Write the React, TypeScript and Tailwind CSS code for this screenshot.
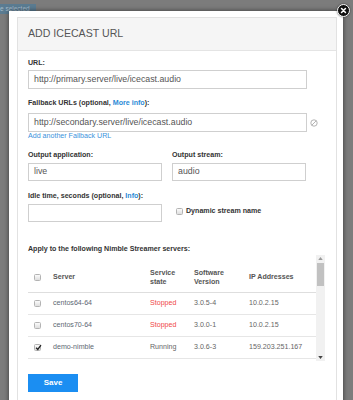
import React from "react";

const font = { fontFamily: '"Liberation Sans", Arial, sans-serif' };

function Cb({ checked }: { checked?: boolean }) {
  return (
    <span className="relative inline-flex h-[7px] w-[7px] items-center justify-center rounded-[1.5px] border border-[#b3b3b3] bg-gradient-to-b from-[#fbfbfb] to-[#dedede]">
      {checked && (
        <svg viewBox="0 0 8 8" className="absolute left-[0px] top-[-1px] h-[7px] w-[7px]">
          <path d="M1.3 4.2 L3.2 6.2 L6.8 1.2" fill="none" stroke="#222" strokeWidth="1.5" />
        </svg>
      )}
    </span>
  );
}

function Input({ value, className }: { value?: string; className: string }) {
  return (
    <div
      className={`flex items-center border border-[#cfcfcf] bg-white pl-[5px] text-[8.8px] text-[#555] ${className}`}
    >
      {value}
    </div>
  );
}

function Label({ children, className = "" }: { children: React.ReactNode; className?: string }) {
  return <div className={`h-[9px] text-[7.1px] font-bold leading-[9px] text-[#333] ${className}`}>{children}</div>;
}

const rows = [
  { name: "centos64-64", state: "Stopped", ver: "3.0.5-4", ip: "10.0.2.15", checked: false },
  { name: "centos70-64", state: "Stopped", ver: "3.0.0-1", ip: "10.0.2.15", checked: false },
  { name: "demo-nimble", state: "Running", ver: "3.0.6-3", ip: "159.203.251.167", checked: true },
];

export default function App() {
  return (
    <div className="relative h-[400px] w-[353px] overflow-hidden bg-[#7c7c7c]" style={font}>
      {/* background button behind overlay */}
      <div className="absolute left-[-8px] top-[4px] flex h-[10px] w-[44px] items-center bg-[#5b7c92] pl-[8px] text-[6.5px] leading-none text-[#a7bccb]">
        e selected
      </div>

      <div className="pl-[9px] pt-[11px]">
        <div className="relative w-[334px] bg-white pb-[20px] pl-[8px] pr-[6px] pt-[6px] shadow-[0_0_5px_rgba(0,0,0,0.55)]">
          {/* close */}
          <div className="absolute right-[-6.5px] top-[-7px] z-10 flex h-[13px] w-[13px] items-center justify-center rounded-full border-[1.5px] border-white bg-[#111] shadow-[0_0_2px_rgba(0,0,0,0.6)]">
            <svg viewBox="0 0 10 10" className="h-[7px] w-[7px]">
              <path d="M2.2 2.2 L7.8 7.8 M7.8 2.2 L2.2 7.8" stroke="#fff" strokeWidth="2.2" strokeLinecap="round" />
            </svg>
          </div>

          <div className="h-[400px] border border-[#e2e2e2]">
            <div className="flex h-[33px] items-center border-b border-[#e4e4e4] bg-[#f5f5f5] pl-[10px] text-[10.6px] text-[#555]">
              ADD ICECAST URL
            </div>

            <div className="pl-[10px] pt-[8px]">
              <Label>URL:</Label>
              <Input className="mt-[2px] h-[19px] w-[279px]" value="http://primary.server/live/icecast.audio" />

              <Label className="mt-[10px]">
                Fallback URLs (optional, <span className="text-[#2b8ad6]">More info</span>):
              </Label>
              <div className="mt-[5px] flex items-center">
                <Input className="h-[19px] w-[279px]" value="http://secondary.server/live/icecast.audio" />
                <svg viewBox="0 0 10 10" className="ml-[3px] h-[8px] w-[8px]">
                  <circle cx="5" cy="5" r="4" fill="none" stroke="#aaa" strokeWidth="1.1" />
                  <path d="M2.3 7.7 L7.7 2.3" stroke="#aaa" strokeWidth="1.1" />
                </svg>
              </div>
              <div className="h-[9px] text-[7.1px] leading-[9px] text-[#3a92dc]">Add another Fallback URL</div>

              <div className="mt-[10px] flex gap-[10px]">
                <div>
                  <Label>Output application:</Label>
                  <Input className="mt-[3px] h-[18px] w-[134px]" value="live" />
                </div>
                <div>
                  <Label>Output stream:</Label>
                  <Input className="mt-[3px] h-[18px] w-[134px]" value="audio" />
                </div>
              </div>

              <Label className="mt-[11px]">
                Idle time, seconds (optional, <span className="text-[#2b8ad6]">Info</span>):
              </Label>
              <div className="mt-[3px] flex gap-[10px]">
                <Input className="h-[18px] w-[134px]" />
                <div className="flex items-start pl-[4px] pt-[4px]">
                  <Cb />
                  <span className="ml-[3px] mt-[-1px] text-[7.1px] font-bold leading-[9px] text-[#333]">
                    Dynamic stream name
                  </span>
                </div>
              </div>

              <Label className="mt-[23px]">Apply to the following Nimble Streamer servers:</Label>

              <div className="mt-[1px] flex h-[106px] w-[297px]">
                <div className="w-[288px] overflow-hidden text-[7.1px]">
                  <div className="flex h-[38px] items-center border-b border-[#dedede] pt-[8px] font-bold leading-[9px] text-[#555]">
                    <div className="flex w-[25px] pl-[6px]">
                      <Cb />
                    </div>
                    <div className="w-[97px]">Server</div>
                    <div className="w-[44px]">
                      Service
                      <br />
                      state
                    </div>
                    <div className="w-[55px]">
                      Software
                      <br />
                      Version
                    </div>
                    <div>IP Addresses</div>
                  </div>
                  {rows.map((r) => (
                    <div key={r.name} className="flex h-[22px] items-center border-b border-[#e6e6e6] text-[#666]">
                      <div className="flex w-[25px] pl-[6px]">
                        <Cb checked={r.checked} />
                      </div>
                      <div className="w-[97px] text-[#5d6773]">{r.name}</div>
                      <div className={`w-[44px] ${r.state === "Stopped" ? "text-[#f04848]" : "text-[#666]"}`}>
                        {r.state}
                      </div>
                      <div className="w-[55px]">{r.ver}</div>
                      <div>{r.ip}</div>
                    </div>
                  ))}
                </div>
                {/* scrollbar */}
                <div className="ml-[0px] flex w-[9px] flex-col items-center bg-[#f1f1f1]">
                  <svg viewBox="0 0 6 4" className="mt-[2px] h-[3px] w-[5px]">
                    <path d="M0 4 L3 0 L6 4 Z" fill="#9a9a9a" />
                  </svg>
                  <div className="mt-[3px] h-[23px] w-[7px] bg-[#c1c1c1]" />
                  <div className="flex-1" />
                  <svg viewBox="0 0 6 4" className="mb-[2px] h-[3px] w-[5px]">
                    <path d="M0 0 L6 0 L3 4 Z" fill="#444" />
                  </svg>
                </div>
              </div>

              <div className="mt-[13px] flex h-[18px] w-[50px] items-center justify-center bg-[#1b8ef2] text-[8px] font-bold text-white">
                Save
              </div>
            </div>
          </div>
        </div>
      </div>
    </div>
  );
}
